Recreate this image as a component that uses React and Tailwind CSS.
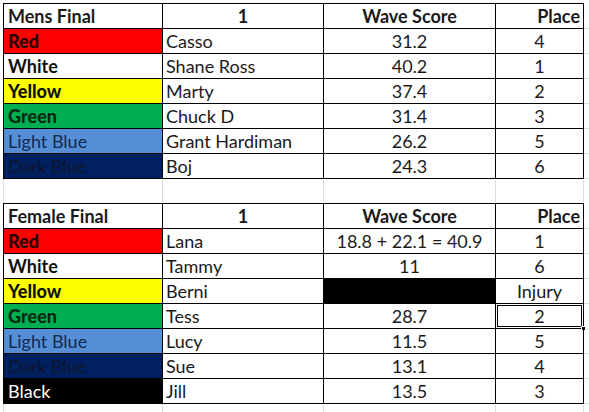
const mens = [
  { label: 'Red', bg: 'bg-[#ff0000]', text: 'text-[#2a0000] font-black', name: 'Casso', score: '31.2', place: '4' },
  { label: 'White', bg: 'bg-white', text: 'text-[#111] font-bold', name: 'Shane Ross', score: '40.2', place: '1' },
  { label: 'Yellow', bg: 'bg-[#ffff00]', text: 'text-[#111100] font-black', name: 'Marty', score: '37.4', place: '2' },
  { label: 'Green', bg: 'bg-[#00b050]', text: 'text-[#062814] font-black', name: 'Chuck D', score: '31.4', place: '3' },
  { label: 'Light Blue', bg: 'bg-[#558ed5]', text: 'text-[#132a52]', name: 'Grant Hardiman', score: '26.2', place: '5' },
  { label: 'Dark Blue', bg: 'bg-[#002060]', text: 'text-[#0c1630]', name: 'Boj', score: '24.3', place: '6' },
];

const female = [
  { label: 'Red', bg: 'bg-[#ff0000]', text: 'text-[#2a0000] font-black', name: 'Lana', score: '18.8 + 22.1 = 40.9', place: '1' },
  { label: 'White', bg: 'bg-white', text: 'text-[#111] font-bold', name: 'Tammy', score: '11', place: '6' },
  { label: 'Yellow', bg: 'bg-[#ffff00]', text: 'text-[#111100] font-black', name: 'Berni', score: '', blackScore: true, place: 'Injury' },
  { label: 'Green', bg: 'bg-[#00b050]', text: 'text-[#062814] font-black', name: 'Tess', score: '28.7', place: '2', selected: true },
  { label: 'Light Blue', bg: 'bg-[#558ed5]', text: 'text-[#132a52]', name: 'Lucy', score: '11.5', place: '5' },
  { label: 'Dark Blue', bg: 'bg-[#002060]', text: 'text-[#0c1630]', name: 'Sue', score: '13.1', place: '4' },
  { label: 'Black', bg: 'bg-black', text: 'text-white', name: 'Jill', score: '13.5', place: '3' },
];

const grid = 'grid grid-cols-[160px_161px_172px_88px_1fr]';
const cell = 'flex items-end pb-[3px] border-r border-b border-black leading-none';

function Header({ title }) {
  return (
    <div className={`${grid} h-[26px] font-bold`}>
      <div className={`${cell} border-l border-t pl-[4px]`}>{title}</div>
      <div className={`${cell} border-t justify-center`}>1</div>
      <div className={`${cell} border-t justify-center`}>Wave Score</div>
      <div className={`${cell} border-t justify-end pr-[3px]`}>Place</div>
      <div className="border-b border-[#dcdcdc]" />
    </div>
  );
}

function Row({ r }) {
  return (
    <div className={`${grid} h-[25px]`}>
      <div className={`${cell} border-l pl-[4px] ${r.bg} ${r.text}`}>{r.label}</div>
      <div className={`${cell} pl-[3px]`}>{r.name}</div>
      <div className={`${cell} justify-center ${r.blackScore ? 'bg-black' : ''}`}>{r.score}</div>
      <div className={`${cell} justify-center relative`}>
        {r.place}
        {r.selected && (
          <>
            <div className="absolute -left-px -top-px right-[-1px] bottom-[-1px] border border-black" />
            <div className="absolute left-[1px] top-[1px] right-[1px] bottom-[1px] border border-black" />
            <div className="absolute right-[-3px] bottom-[-3px] w-[5px] h-[5px] bg-black border border-white" />
          </>
        )}
      </div>
      <div className="border-b border-[#dcdcdc]" />
    </div>
  );
}

function Blank({ h }) {
  return (
    <div className={`${grid}`} style={{ height: h }}>
      <div className="border-l border-r border-[#dcdcdc]" />
      <div className="border-r border-[#dcdcdc]" />
      <div className="border-r border-[#dcdcdc]" />
      <div className="border-r border-[#dcdcdc]" />
      <div />
    </div>
  );
}

export default function App() {
  return (
    <div className="w-[589px] h-[412px] overflow-hidden bg-white pl-[3px] pt-[3px] text-[18px] text-[#1a1a1a] font-['Lato',sans-serif]">
      <Header title="Mens Final" />
      {mens.map((r) => (
        <Row key={'m' + r.label} r={r} />
      ))}
      <Blank h={24} />
      <Header title="Female Final" />
      {female.map((r) => (
        <Row key={'f' + r.label} r={r} />
      ))}
      <Blank h={10} />
    </div>
  );
}
